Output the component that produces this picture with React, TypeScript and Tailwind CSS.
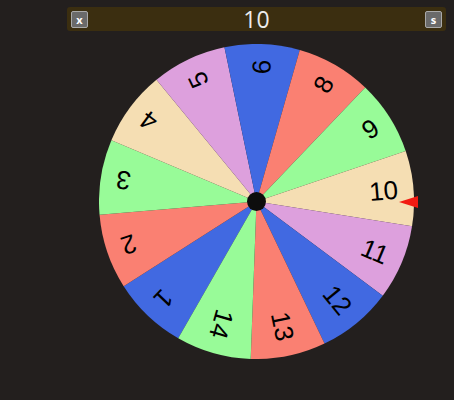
import React from 'react'

// wheel entries, 7 already drawn off
const entries = ['1', '2', '3', '4', '5', '6', '8', '9', '10', '11', '12', '13', '14']
const palette = ['#4169e1', '#fa8072', '#98fb98', '#f5deb3', '#dda0dd']

const R = 157.5
const START = 119.8
const ARC = 360 / entries.length

const polar = (deg: number, r: number) => {
  const a = (deg * Math.PI) / 180
  return [r * Math.cos(a), r * Math.sin(a)]
}

function Wheel() {
  return (
    <div className="relative h-[315px] w-[315px]">
      <svg width={315} height={315} viewBox="-157.5 -157.5 315 315" className="block">
        {entries.map((label, i) => {
          const a0 = START + i * ARC
          const a1 = a0 + ARC
          const [x0, y0] = polar(a0, R)
          const [x1, y1] = polar(a1, R)
          const mid = a0 + ARC / 2
          return (
            <g key={label}>
              <path
                d={`M0 0 L${x0} ${y0} A${R} ${R} 0 0 1 ${x1} ${y1} Z`}
                fill={palette[i % palette.length]}
              />
              <text
                transform={`rotate(${mid})`}
                x={142}
                y={0}
                textAnchor="end"
                dominantBaseline="central"
                fontSize={26}
                fill="#000"
                style={{ fontFamily: '"Liberation Sans", Arial, sans-serif' }}>
                {label}
              </text>
            </g>
          )
        })}
        <circle cx={0} cy={0} r={9.5} fill="#0d0d0d" />
      </svg>
      {/* pointer */}
      <svg width={20} height={12} viewBox="0 0 20 12" className="absolute left-[300px] top-[152px]">
        <polygon points="0,6 19,0 19,12" fill="#f21b12" />
      </svg>
    </div>
  )
}

function SmallButton({ children }: { children: React.ReactNode }) {
  return (
    <button className="flex h-[17px] w-[17px] items-center justify-center rounded-[2px] border border-[#a9a9a9] bg-[#6a6a6a] text-[11px] leading-none font-bold text-white">
      {children}
    </button>
  )
}

export default function App() {
  return (
    <div
      className="flex h-[400px] w-full flex-col items-center bg-[#231f1e] pt-[7px] pr-[8px] pl-[67px]"
      style={{ fontFamily: '"Open Sans", "Liberation Sans", sans-serif' }}>
      <div className="flex h-[24px] w-full items-center justify-between rounded-[3px] bg-[#3b2e10] px-[4px]">
        <SmallButton>x</SmallButton>
        <span className="text-[23px] leading-none text-[#ececec]">10</span>
        <SmallButton>s</SmallButton>
      </div>
      <div className="mt-[13px]">
        <Wheel />
      </div>
    </div>
  )
}
